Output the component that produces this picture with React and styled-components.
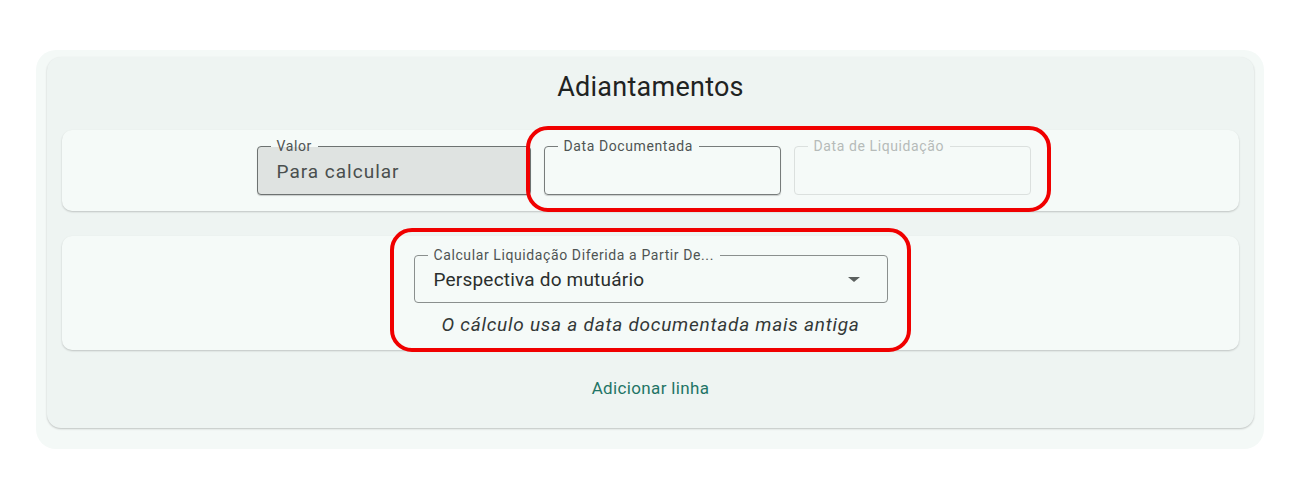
import React from "react";
import styled, { createGlobalStyle } from "styled-components";

const Global = createGlobalStyle`
  body {
    margin: 0;
    background: #ffffff;
    font-family: Roboto, "Noto Sans", sans-serif;
  }
`;

const rowBg = "#f5faf8";
const filledBg = "#dfe3e1";

export default function App() {
  return (
    <>
      <Global />
      <Page>
        <Outer>
          <Card>
            <Title>Adiantamentos</Title>
            <Row>
              <Field width={274} filled>
                <Legend inner={filledBg}>Valor</Legend>
                <Value>Para calcular</Value>
              </Field>
              <Highlight dates>
                <Field width={237}>
                  <Legend>Data Documentada</Legend>
                </Field>
                <Field width={237} disabled>
                  <Legend disabled>Data de Liquidação</Legend>
                </Field>
              </Highlight>
            </Row>
            <Row tall>
              <Highlight>
                <SelectBox>
                  <Legend>Calcular Liquidação Diferida a Partir De...</Legend>
                  <SelectValue>Perspectiva do mutuário</SelectValue>
                  <Arrow />
                </SelectBox>
                <Helper>O cálculo usa a data documentada mais antiga</Helper>
              </Highlight>
            </Row>
            <AddButton>Adicionar linha</AddButton>
          </Card>
        </Outer>
      </Page>
    </>
  );
}

const Page = styled.div`
  padding: 50px 36px 0 36px;
`;

const Outer = styled.div`
  background: #f4f9f7;
  border-radius: 20px;
  padding: 7px 10px 21px 11px;
`;

const Card = styled.div`
  background: #eef4f2;
  border-radius: 14px;
  box-shadow: 0 1px 2px rgba(0, 0, 0, 0.22);
  padding: 14px 15px 26px 15px;
  display: flex;
  flex-direction: column;
`;

const Title = styled.h2`
  margin: 0 0 27px 0;
  text-align: center;
  font-weight: 400;
  font-size: 27px;
  letter-spacing: 0.25px;
  line-height: 32px;
  color: #1f2322;
`;

const Row = styled.div`
  background: ${rowBg};
  border-radius: 10px;
  box-shadow: 0 1px 2px rgba(0, 0, 0, 0.2);
  display: flex;
  justify-content: center;
  gap: 13px;
  padding: ${(p) => (p.tall ? "19px 0 14px 0" : "16px 14px 16px 0")};
  margin-bottom: 25px;
`;

const Highlight = styled.div`
  position: relative;
  display: flex;
  flex-direction: ${(p) => (p.dates ? "row" : "column")};
  align-items: center;
  gap: ${(p) => (p.dates ? "13px" : "11px")};

  &::after {
    content: "";
    position: absolute;
    left: ${(p) => (p.dates ? "-18px" : "-24px")};
    right: ${(p) => (p.dates ? "-20px" : "-23px")};
    top: ${(p) => (p.dates ? "-20px" : "-27px")};
    bottom: ${(p) => (p.dates ? "-17px" : "-16px")};
    border: 4px solid #f00000;
    border-radius: 22px;
    pointer-events: none;
  }
`;

const Field = styled.div`
  position: relative;
  box-sizing: border-box;
  width: ${(p) => p.width}px;
  height: 49px;
  border-radius: 4px;
  border: 1px solid ${(p) => (p.disabled ? "#dbe0de" : p.filled ? "#6d7271" : "#777c7b")};
  background: ${(p) => (p.filled ? filledBg : "transparent")};
  box-shadow: ${(p) => (p.disabled ? "none" : "0 1px 1px rgba(0,0,0,0.18)")};
  display: flex;
  align-items: center;
  padding: 0 19px;
`;

const Legend = styled.span`
  position: absolute;
  top: -9px;
  left: 13px;
  padding: 0 6px;
  font-size: 14px;
  line-height: 16px;
  letter-spacing: 0.6px;
  color: ${(p) => (p.disabled ? "#b6bbb9" : "#4f5453")};
  background: linear-gradient(to bottom, ${rowBg} 9px, ${(p) => p.inner || rowBg} 9px);
  white-space: nowrap;
`;

const Value = styled.span`
  font-size: 19px;
  letter-spacing: 1px;
  color: #4a4f4e;
  margin-top: 2px;
`;

const SelectBox = styled.div`
  position: relative;
  box-sizing: border-box;
  width: 474px;
  height: 48px;
  border: 1px solid #8a8f8e;
  border-radius: 4px;
  display: flex;
  align-items: center;
  padding: 0 19px;
`;

const SelectValue = styled.span`
  font-size: 19px;
  letter-spacing: 0.2px;
  color: #2a2e2d;
`;

const Arrow = styled.span`
  position: absolute;
  right: 27px;
  top: 21px;
  width: 0;
  height: 0;
  border-left: 6px solid transparent;
  border-right: 6px solid transparent;
  border-top: 5px solid #5b605f;
`;

const Helper = styled.p`
  margin: 0;
  font-style: italic;
  font-size: 19px;
  letter-spacing: 0.75px;
  color: #333837;
  line-height: 22px;
`;

const AddButton = styled.button`
  align-self: center;
  margin: 0;
  border: none;
  background: transparent;
  font-family: Roboto, sans-serif;
  font-size: 17px;
  letter-spacing: 0.35px;
  line-height: 19px;
  color: #1f7466;
  padding: 4px 8px;
  cursor: pointer;
`;
